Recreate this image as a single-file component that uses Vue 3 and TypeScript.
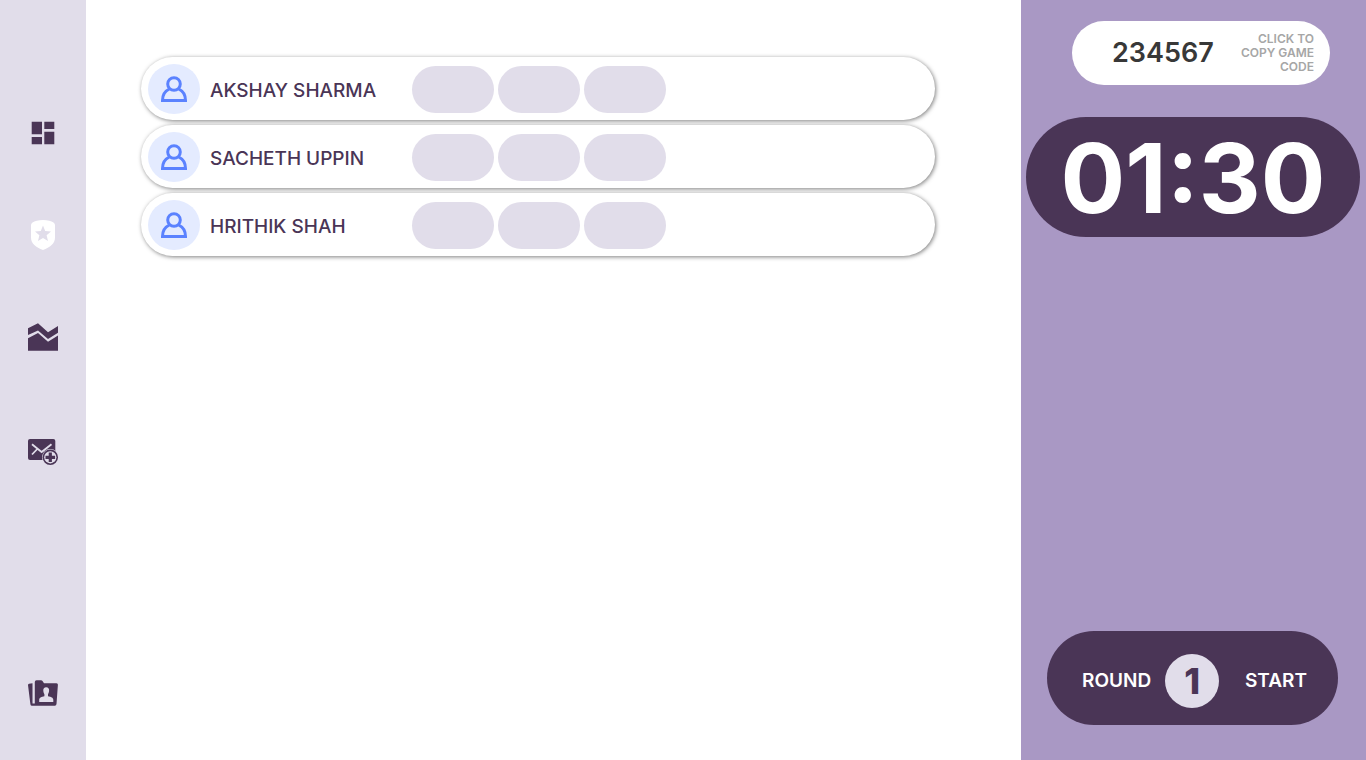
<script setup lang="ts">
import { ref } from 'vue'

interface Player {
  name: string
  scores: string[]
}

const players = ref<Player[]>([
  { name: 'AKSHAY SHARMA', scores: ['', '', ''] },
  { name: 'SACHETH UPPIN', scores: ['', '', ''] },
  { name: 'HRITHIK SHAH', scores: ['', '', ''] },
])

const gameCode = ref('234567')
const timer = ref('01:30')
const round = ref(1)

function copyCode(): void {
  navigator.clipboard?.writeText(gameCode.value)
}
</script>

<template>
  <div class="page">
    <nav class="sidebar" aria-label="Main">
      <a href="#dashboard" aria-label="Dashboard">
        <svg viewBox="0 0 30 30"><path d="M3.7 3.7h10.3v12.6H3.7zM3.7 19h10.3v7.3H3.7zM16.3 3.7h10v7.3h-10zM16.3 13.7h10v12.6h-10z" /></svg>
      </a>
      <a href="#game" class="active" aria-label="Game">
        <svg viewBox="0 0 30 30">
          <path fill-rule="evenodd" d="M15 0C10.500 0 6.500 1 4.500 2.400Q3 3.400 3 5V17.500C3 23.500 8 27.500 15 30C22 27.500 27 23.500 27 17.500V5Q27 3.400 25.500 2.400C23.500 1 19.500 0 15 0zM15 5.500L17.200 10.900L23 11.400L18.600 15.200L20 21L15 18L10 21L11.400 15.200L7 11.400L12.800 10.900z" />
        </svg>
      </a>
      <a href="#statistics" aria-label="Statistics">
        <svg viewBox="0 0 30 30"><path d="M0 6.300L10 1.200L20 10.200L30 4V10.800L20 17L10 8.500L0 13zM0 16.200L10 11L20 19.700L30 13.400V28.800H0z" /></svg>
      </a>
      <a href="#invite" class="invite" aria-label="Invite">
        <svg viewBox="0 0 30 30">
          <rect x="0" y="2" width="27.300" height="21" rx="2" />
          <path class="line" d="M4 7.300L13.600 15L23.500 7.300M4 17.500L9.300 12" />
          <circle class="light" cx="22.300" cy="20.300" r="8.300" />
          <circle cx="22.300" cy="20.300" r="7.700" />
          <circle class="light" cx="22.300" cy="20.300" r="6.100" />
          <path d="M20.700 15.500h3.200v3.200h3.200v3.200h-3.200v3.200h-3.200v-3.200h-3.200v-3.200h3.200z" />
        </svg>
      </a>
      <a href="#contacts" class="contacts" aria-label="Contacts">
        <svg viewBox="0 0 30 30">
          <path d="M0 7Q0 6 1 5.800L4.500 5.200V25.500H6.800V4Q6.800 2.200 8.500 2.200H13Q14 2.200 14.500 3L16 5.200H28.500Q30 5.200 29.900 6.800L28.500 26Q28.300 27.700 26.800 27.700H4Q2.600 27.700 2.400 26.200z" />
          <path class="light" d="M18.200 9.200C20.200 9.200 21.300 10.700 21.100 12.600C21 14.300 20.500 15.400 20 16.200V18.300C23 19 25.300 19.500 25.300 22V24H11.200V22C11.200 19.500 13.500 19 16.400 18.300V16.200C15.900 15.400 15.400 14.300 15.300 12.600C15.100 10.700 16.200 9.200 18.200 9.200z" />
        </svg>
      </a>
    </nav>

    <main class="board">
      <ul class="players">
        <li v-for="player in players" :key="player.name" class="player">
          <span class="avatar">
            <svg viewBox="0 0 28 28">
              <circle cx="14" cy="9" r="6.300" />
              <path d="M9.300 14C5 16 2.500 20 2.500 25.500H25.500C25.500 20 23 16 18.700 14" />
            </svg>
          </span>
          <span class="name">{{ player.name }}</span>
          <span class="scores">
            <span v-for="(score, i) in player.scores" :key="i" class="score">{{ score }}</span>
          </span>
        </li>
      </ul>
    </main>

    <aside class="panel">
      <button type="button" class="code" @click="copyCode">
        <span class="digits">{{ gameCode }}</span>
        <span class="hint">CLICK TO COPY GAME CODE</span>
      </button>
      <div class="timer" role="timer">{{ timer }}</div>
      <div class="round">
        <span class="label">ROUND</span>
        <span class="number">{{ round }}</span>
        <button type="button" class="start">START</button>
      </div>
    </aside>
  </div>
</template>

<style>
body {
  margin: 0;
}
</style>

<style scoped>
.page {
  display: grid;
  grid-template-columns: 86px 1fr 345px;
  min-height: 100vh;
  background: #fff;
  color: #4a3556;
  font-family: Inter, "Liberation Sans", sans-serif;
}

button {
  border: 0;
  padding: 0;
  background: none;
  color: inherit;
  font: inherit;
  cursor: pointer;
}

.sidebar {
  box-sizing: border-box;
  display: flex;
  flex-direction: column;
  align-items: center;
  gap: 72px;
  padding: 118px 0 52px;
  background: #e1ddea;
}

.sidebar a {
  display: block;
  height: 30px;
  color: #4a3556;
}

.sidebar .active {
  color: #fff;
}

.sidebar .invite {
  margin-top: 13px;
}

.sidebar .contacts {
  margin-top: auto;
}

.sidebar svg {
  display: block;
  width: 30px;
  height: 30px;
  fill: currentColor;
}

.sidebar .light {
  fill: #e1ddea;
}

.sidebar .line {
  fill: none;
  stroke: #e1ddea;
  stroke-width: 1.8;
}

.board {
  padding: 57px 86px 0 55px;
}

.players {
  display: flex;
  flex-direction: column;
  gap: 5px;
  margin: 0;
  padding: 0;
  list-style: none;
}

.player {
  box-sizing: border-box;
  display: grid;
  grid-template-columns: 52px 192px 1fr;
  column-gap: 10px;
  align-items: center;
  height: 63px;
  padding: 1px 7px 0;
  border-radius: 32px;
  background: #fff;
  box-shadow: 1px 1px 4px rgba(0, 0, 0, 0.5);
}

.avatar {
  display: flex;
  align-items: center;
  justify-content: center;
  height: 50px;
  border-radius: 50%;
  background: #e4ebff;
}

.avatar svg {
  width: 28px;
  height: 28px;
  fill: none;
  stroke: #5b82ff;
  stroke-width: 3;
  stroke-linejoin: miter;
}

.name {
  padding-top: 3px;
  font-size: 19px;
  line-height: 26px;
  font-weight: 500;
  white-space: nowrap;
}

.scores {
  display: flex;
  gap: 4px;
}

.score {
  width: 82px;
  height: 47px;
  border-radius: 24px;
  background: #e1ddea;
}

.panel {
  box-sizing: border-box;
  display: flex;
  flex-direction: column;
  padding: 21px 6px 35px 5px;
  background: #a998c4;
}

.code {
  box-sizing: border-box;
  display: flex;
  align-items: center;
  justify-content: space-between;
  height: 64px;
  margin: 0 30px 0 46px;
  padding: 0 16px 0 40px;
  border-radius: 32px;
  background: #fff;
}

.digits {
  color: #383838;
  font-size: 27px;
  line-height: 32px;
  font-weight: 600;
}

.hint {
  width: 80px;
  color: #a6a6a6;
  font-size: 12px;
  line-height: 14px;
  font-weight: 600;
  text-align: right;
}

.timer {
  margin-top: 32px;
  padding-top: 2px;
  border-radius: 60px;
  background: #4a3556;
  color: #fff;
  font-size: 96px;
  line-height: 118px;
  font-weight: 700;
  text-align: center;
}

.round {
  box-sizing: border-box;
  display: flex;
  align-items: center;
  height: 94px;
  margin: auto 22px 0 21px;
  padding: 6px 31px 0 35px;
  border-radius: 47px;
  background: #4a3556;
  color: #fff;
  font-size: 19px;
  line-height: 26px;
  font-weight: 600;
}

.number {
  width: 54px;
  margin-left: 14px;
  border-radius: 50%;
  background: #e1ddea;
  color: #4a3556;
  font-size: 36px;
  line-height: 54px;
  font-weight: 800;
  text-align: center;
}

.start {
  margin-left: auto;
}
</style>
